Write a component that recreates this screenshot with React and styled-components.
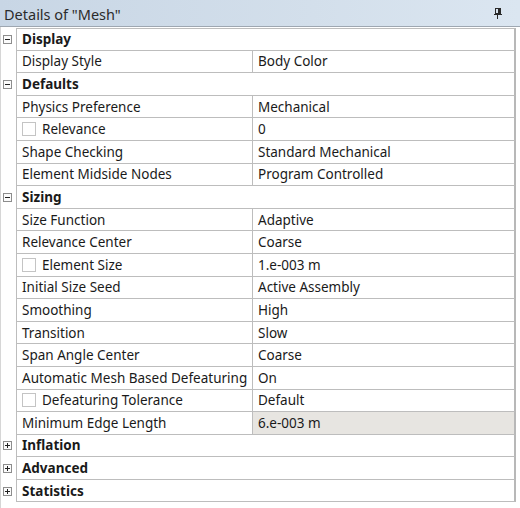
import React from "react";
import styled, { createGlobalStyle } from "styled-components";

const GlobalStyle = createGlobalStyle`
  html, body { margin: 0; padding: 0; background: #ffffff; }
  body { font-family: "Noto Sans", "Noto Sans CJK KR", sans-serif; }
`;

const Panel = styled.div`
  width: 520px;
  height: 508px;
  background: #ffffff;
  display: flex;
  flex-direction: column;
  box-sizing: border-box;
`;

const TitleBar = styled.div`
  height: 27px;
  box-sizing: border-box;
  background: linear-gradient(to right, #c8d6e5 0%, #d3dfeb 60%, #dbe6f1 100%);
  border-bottom: 1px solid #9ea7b1;
  display: flex;
  align-items: center;
  justify-content: space-between;
  padding: 1px 18px 0 4px;
  font-size: 14.5px;
  color: #2b2b2b;
  flex: none;
`;

const Body = styled.div`
  flex: 1;
  padding: 1px 4px 0 0;
  border-left: 1px solid #d6d6d6;
  display: flex;
  flex-direction: column;
`;

const Row = styled.div`
  display: grid;
  grid-template-columns: ${(p) => (p.$header ? "15px 1fr" : "15px 236px 1fr")};
  height: 22.6px;
  box-sizing: border-box;
`;

const Gutter = styled.div`
  display: flex;
  align-items: center;
  padding-left: 2px;
`;

const Cell = styled.div`
  box-sizing: border-box;
  border-left: 1px solid #bdbdbd;
  border-bottom: 1px solid #bdbdbd;
  border-top: ${(p) => (p.$first ? "1px solid #bdbdbd" : "none")};
  border-right: ${(p) => (p.$last ? "2px solid #b8b8b8" : "none")};
  background: ${(p) => (p.$shaded ? "#e7e5e1" : "#ffffff")};
  display: flex;
  align-items: center;
  gap: 6px;
  padding-left: 5px;
  font-size: 13.5px;
  font-weight: ${(p) => (p.$bold ? 700 : 400)};
  color: #1a1a1a;
  white-space: nowrap;
  overflow: hidden;
`;

const Toggle = styled.div`
  width: 9px;
  height: 9px;
  box-sizing: border-box;
  border: 1px solid #8d8d8d;
  background: #fbfbfb;
  position: relative;
  &::before {
    content: "";
    position: absolute;
    left: 1px;
    right: 1px;
    top: 3px;
    height: 1px;
    background: #222;
  }
  &::after {
    content: "";
    display: ${(p) => (p.$plus ? "block" : "none")};
    position: absolute;
    top: 1px;
    bottom: 1px;
    left: 3px;
    width: 1px;
    background: #222;
  }
`;

const CheckBox = styled.span`
  width: 14px;
  height: 14px;
  box-sizing: border-box;
  border: 1px solid #c4c4c4;
  background: #ffffff;
  flex: none;
`;

const Pin = () => (
  <svg width="8" height="11" viewBox="0 0 8 11">
    <rect x="1.5" y="0.5" width="5" height="5" fill="none" stroke="#2a2a2a" />
    <rect x="4" y="1" width="2" height="5" fill="#2a2a2a" />
    <rect x="0" y="6" width="8" height="1" fill="#2a2a2a" />
    <rect x="3" y="7" width="1" height="4" fill="#2a2a2a" />
  </svg>
);

const sections = [
  {
    title: "Display",
    open: true,
    rows: [["Display Style", "Body Color"]],
  },
  {
    title: "Defaults",
    open: true,
    rows: [
      ["Physics Preference", "Mechanical"],
      ["Relevance", "0", true],
      ["Shape Checking", "Standard Mechanical"],
      ["Element Midside Nodes", "Program Controlled"],
    ],
  },
  {
    title: "Sizing",
    open: true,
    rows: [
      ["Size Function", "Adaptive"],
      ["Relevance Center", "Coarse"],
      ["Element Size", "1.e-003 m", true],
      ["Initial Size Seed", "Active Assembly"],
      ["Smoothing", "High"],
      ["Transition", "Slow"],
      ["Span Angle Center", "Coarse"],
      ["Automatic Mesh Based Defeaturing", "On"],
      ["Defeaturing Tolerance", "Default", true],
      ["Minimum Edge Length", "6.e-003 m", false, true],
    ],
  },
  { title: "Inflation", open: false, rows: [] },
  { title: "Advanced", open: false, rows: [] },
  { title: "Statistics", open: false, rows: [] },
];

export default function App() {
  let first = true;
  return (
    <Panel>
      <GlobalStyle />
      <TitleBar>
        <span>Details of "Mesh"</span>
        <Pin />
      </TitleBar>
      <Body>
        {sections.map((s) => {
          const isFirst = first;
          first = false;
          return (
            <React.Fragment key={s.title}>
              <Row $header>
                <Gutter>
                  <Toggle $plus={!s.open} />
                </Gutter>
                <Cell $bold $last $first={isFirst}>
                  {s.title}
                </Cell>
              </Row>
              {s.rows.map(([name, value, check, shaded]) => (
                <Row key={name}>
                  <Gutter />
                  <Cell>
                    {check && <CheckBox />}
                    {name}
                  </Cell>
                  <Cell $last $shaded={shaded}>
                    {value}
                  </Cell>
                </Row>
              ))}
            </React.Fragment>
          );
        })}
      </Body>
    </Panel>
  );
}
